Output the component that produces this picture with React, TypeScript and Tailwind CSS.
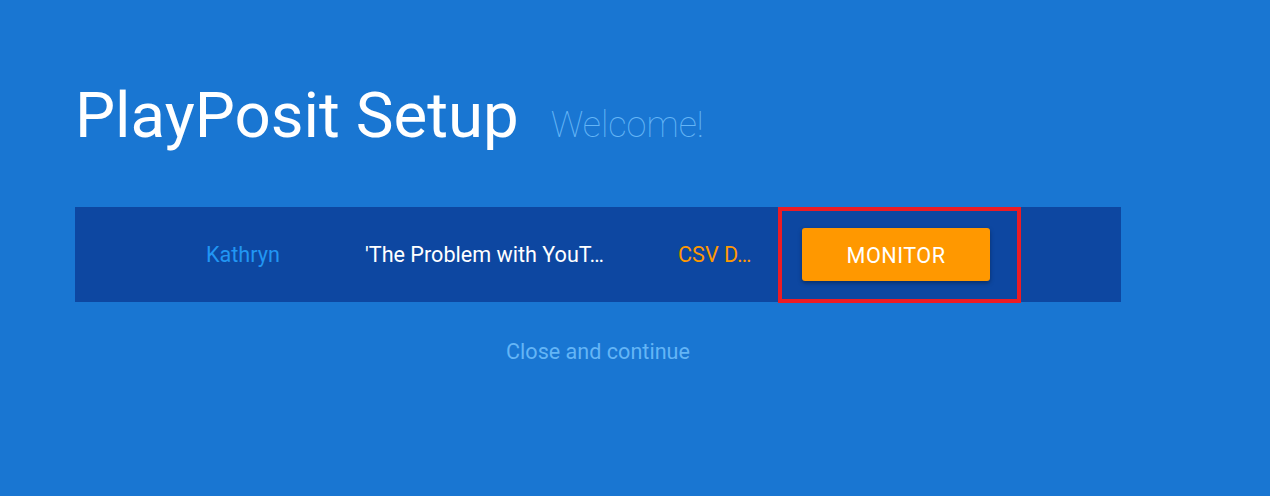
export default function App() {
  return (
    <div className="min-h-screen w-full bg-[#1976d2] font-['Roboto','Liberation_Sans',sans-serif]">
      <div className="pl-[75px] pt-[84px] w-[1121px]">
        {/* Header */}
        <div className="flex items-baseline gap-[32px]">
          <h1 className="text-[63.6px] leading-none font-normal text-white">PlayPosit Setup</h1>
          <span className="text-[36px] leading-none font-thin text-[#64b5f6]">Welcome!</span>
        </div>

        {/* Session bar */}
        <div className="mt-[59px] h-[95px] bg-[#0d47a1] flex items-center pl-[131px] text-[21.6px] leading-none whitespace-nowrap">
          <span className="w-[159px] pt-[2px] text-[#2196f3]">Kathryn</span>
          <span className="w-[313px] pt-[2px] text-white">'The Problem with YouT…</span>
          <span className="w-[100px] pt-[2px] text-[#ff9800]">CSV D…</span>
          <div className="w-[243px] h-[96px] mt-[1px] border-4 border-[#ed1c24] flex items-center pl-[20px]">
            <button className="w-[188px] h-[53px] rounded-[3px] bg-[#ff9800] text-white text-[21.6px] tracking-[0.5px] pt-[2px] shadow-[0_2px_4px_rgba(0,0,0,0.35)]">
              MONITOR
            </button>
          </div>
        </div>

        <div className="mt-[39px] text-center text-[21.6px] leading-[22px] text-[#64b5f6]">Close and continue</div>
      </div>
    </div>
  );
}
